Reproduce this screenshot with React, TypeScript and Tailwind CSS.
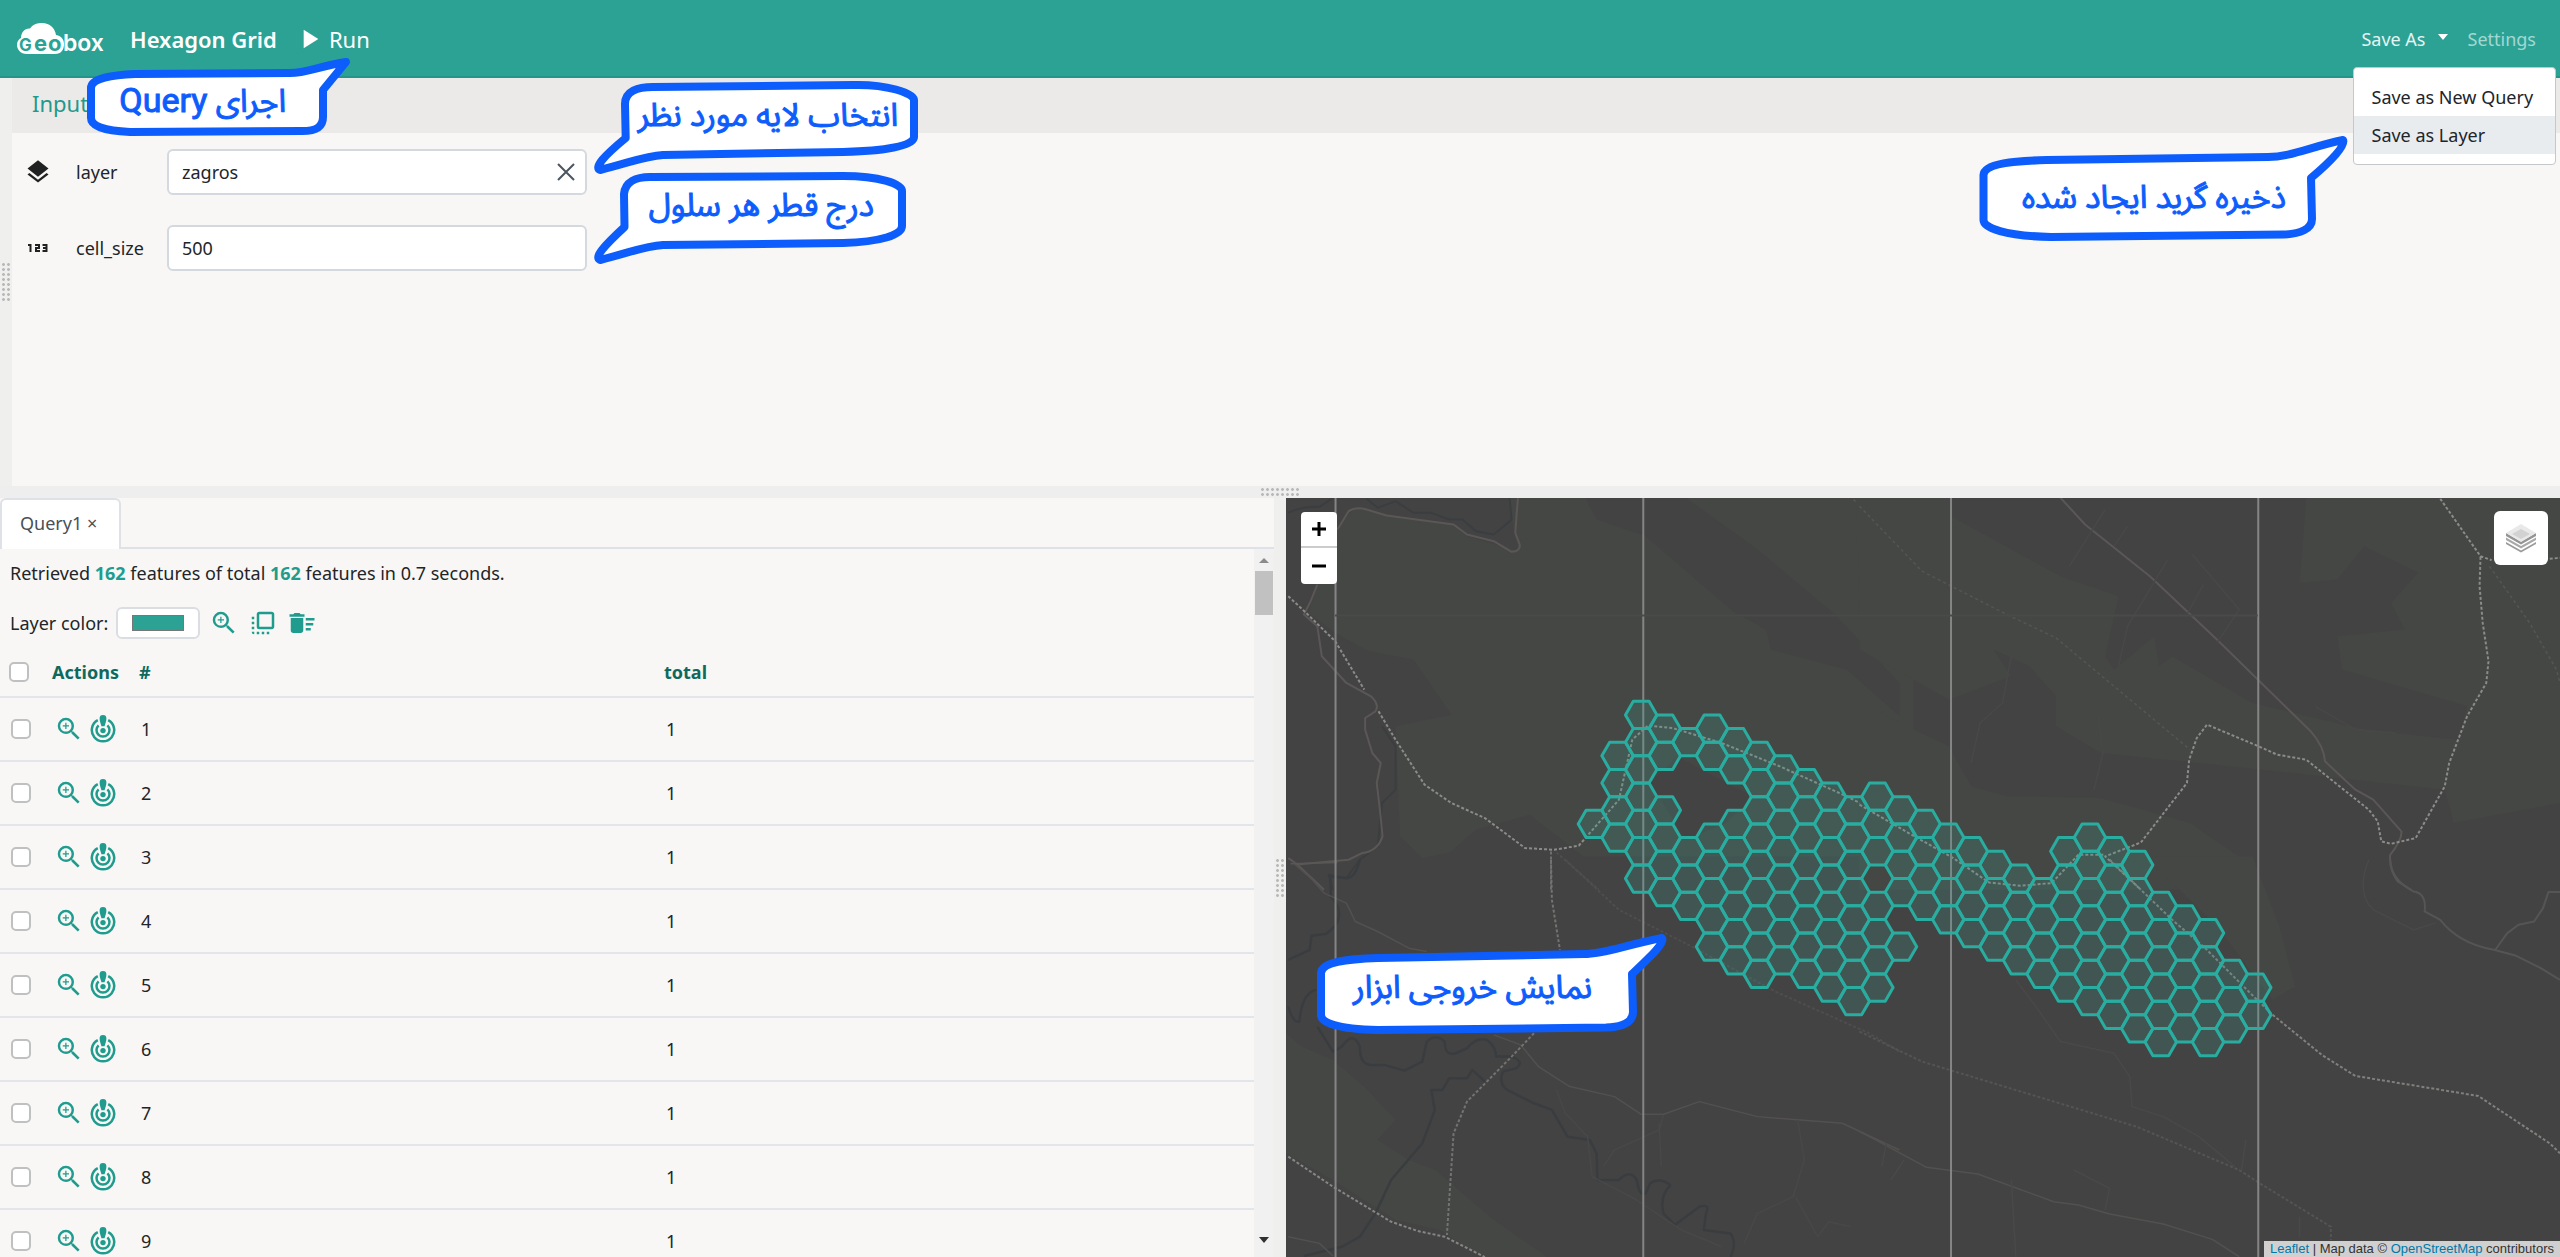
import { type ReactNode } from "react";
import {
  MdDeleteSweep,
  MdFlipToFront,
  MdLayers,
  MdOutlineZoomIn,
  MdPlayArrow,
} from "react-icons/md";

/* ---------- Hexagon grid data: column index -> half-row ranges [from, to] ---------- */

const HEX_COLUMNS: [number, number][][] = [
  [[8, 8]],
  [[3, 9]],
  [[0, 12]],
  [[1, 3], [7, 13]],
  [[2, 2], [10, 14]],
  [[1, 3], [9, 17]],
  [[2, 4], [8, 18]],
  [[3, 19]],
  [[4, 18]],
  [[5, 19]],
  [[6, 20]],
  [[7, 21]],
  [[6, 10], [14, 20]],
  [[7, 13], [17, 17]],
  [[8, 14]],
  [[9, 15]],
  [[10, 16]],
  [[11, 17]],
  [[12, 18]],
  [[13, 19]],
  [[10, 20]],
  [[9, 21]],
  [[10, 22]],
  [[11, 23]],
  [[14, 24]],
  [[15, 23]],
  [[16, 24]],
  [[19, 23]],
  [[20, 22]],
];

const HEX_RADIUS = 15.73;
const HEX_HALF = 13.62;

function hexPoints(column: number, halfRow: number) {
  const cx = 1594.7 + 23.6 * column;
  const cy = 715.3 + HEX_HALF * halfRow;
  const h = HEX_RADIUS / 2;
  return [
    [cx - HEX_RADIUS, cy],
    [cx - h, cy - HEX_HALF],
    [cx + h, cy - HEX_HALF],
    [cx + HEX_RADIUS, cy],
    [cx + h, cy + HEX_HALF],
    [cx - h, cy + HEX_HALF],
  ]
    .map((p) => p.join(","))
    .join(" ");
}

const HEX_CELLS = HEX_COLUMNS.flatMap((ranges, column) =>
  ranges.flatMap(([from, to]) => {
    const cells: string[] = [];
    for (let k = from; k <= to; k += 2) cells.push(hexPoints(column, k));
    return cells;
  }),
);

/* ---------- Icons ---------- */

function Logo() {
  return (
    <svg viewBox="0 0 90 34" className="h-[34px] w-[90px] shrink-0" role="img" aria-label="Geobox">
      <path
        d="M11 32 C4 32 1 27 1 23 C1 19 3 17 5 16 C5 10 9 6 14 6.500 C17 2 22 1 26 1 C34 1 39 6 40 13 C46 14 48 18 48 22 C48 28 45 32 39 32 Z"
        fill="#fff"
      />
      <g fontFamily="Inter" fontWeight="700">
        <g fill="#2ca295">
          <text x="3" y="29" fontSize="17">G</text>
          <text x="18" y="29" fontSize="22">e</text>
          <text x="32" y="29" fontSize="22">o</text>
        </g>
        <text x="47" y="29" fontSize="23" fontWeight="600" fill="#fff">box</text>
      </g>
    </svg>
  );
}

function NumberIcon() {
  return (
    <svg viewBox="0 0 20 10" className="mx-1 h-[10px] w-5 text-[#212121]" fill="none" stroke="currentColor" strokeWidth="2" aria-hidden="true">
      <path d="M0 2h2.500v7M7 2h4v3H8v3h4M14.500 2h4v6h-4M15 5h3.500" />
    </svg>
  );
}

function TargetIcon() {
  return (
    <svg viewBox="0 0 26 28" className="h-7 w-[26px]" fill="none" stroke="currentColor" strokeWidth="2.500" aria-hidden="true">
      <path d="M7.800 5.200A11.200 11.200 0 1 0 18.200 5.200" />
      <path d="M8.600 10.300A6.500 6.500 0 1 0 17.400 10.300" />
      <circle cx="13" cy="15.600" r="2.700" fill="currentColor" stroke="none" />
      <path d="M9.600 3.400a3.400 3.400 0 0 1 6.800 0C16.400 6 15.200 8.500 14.600 11.300h-3.200C10.800 8.500 9.600 6 9.600 3.400Z" fill="currentColor" stroke="none" />
    </svg>
  );
}

function LayersControlIcon() {
  return (
    <svg viewBox="0 0 32 32" className="h-8 w-8" aria-hidden="true">
      <path d="M1 20 16 28.500 31 20 31 22 16 30.500 1 22Z" fill="#9b9b9b" />
      <path d="M1 15.500 16 24 31 15.500 31 18 16 26.500 1 18Z" fill="#a8a8a8" />
      <path d="M1 11 16 19.500 31 11 31 14 16 22.500 1 14Z" fill="#949494" />
      <path d="M16 2 31 11 16 20 1 11Z" fill="#e9e9e9" />
      <path d="M16 7 25 12 16 17 7 12Z" fill="#d2d2d2" />
    </svg>
  );
}

/* ---------- Call-out bubbles ---------- */

function Bubble({
  className,
  viewBox,
  path,
  textClass,
  children,
}: {
  className: string;
  viewBox: string;
  path: string;
  textClass: string;
  children: ReactNode;
}) {
  return (
    <div className={"pointer-events-none absolute z-30 " + className}>
      <svg viewBox={viewBox} className="absolute inset-0 h-full w-full overflow-visible" aria-hidden="true">
        <path d={path} fill="#fff" stroke="#0d5dfd" strokeWidth="8" strokeLinejoin="round" />
      </svg>
      <p
        dir="rtl"
        className={
          "absolute whitespace-nowrap font-['Noto_Sans_Arabic','DejaVu_Sans_Condensed','DejaVu_Sans',sans-serif] text-[32px] leading-[48px] text-[#0d5dfd] [-webkit-text-stroke:1px_#0d5dfd] " +
          textClass
        }
      >
        {children}
      </p>
    </div>
  );
}

/* ---------- Header ---------- */

function Header() {
  return (
    <header className="relative z-20 flex h-[78px] shrink-0 items-center border-b-2 border-[#249588] bg-[#2ca295] pt-[2px] pr-6 pl-4 text-white">
      <Logo />
      <h1 className="ml-6 text-[22px] font-semibold">Hexagon Grid</h1>
      <button type="button" className="ml-4 flex items-center gap-1 text-[22px]">
        <MdPlayArrow className="h-8 w-8" />
        Run
      </button>
      <nav className="ml-auto flex items-center gap-5 text-lg">
        <div className="relative">
          <button type="button" className="flex items-center gap-3 text-[#e4f4f2]" aria-haspopup="menu" aria-expanded="true">
            Save As
            <span className="mb-1 border-x-[5px] border-t-[6px] border-x-transparent border-t-white" />
          </button>
          <ul
            role="menu"
            className="absolute top-[42px] -right-[108px] w-[203px] rounded border border-[#c4c8ca] bg-white py-[10px] text-lg text-[#212529]"
          >
            <li>
              <button type="button" role="menuitem" className="flex h-[38px] w-full items-center pl-[18px] whitespace-nowrap">
                Save as New Query
              </button>
            </li>
            <li>
              <button type="button" role="menuitem" className="flex h-[38px] w-full items-center bg-[#e9ecef] pl-[18px] whitespace-nowrap">
                Save as Layer
              </button>
            </li>
          </ul>
        </div>
        <button type="button" className="text-[#a3d8d1]">Settings</button>
      </nav>
      <Bubble
        className="top-[56px] left-[86px] h-[80px] w-[266px]"
        viewBox="86 56 266 80"
        path="M91 88C91 78 113 75 135 74L290 73C306 73 320 66 346 62L323 90V117C323 127 316 131 302 131L130 132C104 131 91 126 91 118Z"
        textClass="top-[20px] right-[66px]"
      >
        اجرای <span className="font-[Roboto] text-[34px] font-normal">Query</span>
      </Bubble>
    </header>
  );
}

/* ---------- Input parameters ---------- */

function Grip({ vertical = false }: { vertical?: boolean }) {
  return (
    <span
      className={
        "bg-[radial-gradient(#b9b9b9_1.2px,transparent_1.6px)] bg-[size:5px_5px] " +
        (vertical ? "h-[40px] w-[10px]" : "h-[10px] w-[40px]")
      }
    />
  );
}

function InputPanel() {
  return (
    <section className="flex min-h-0 flex-[35]">
      <div className="flex w-3 shrink-0 items-center justify-center bg-[#efefee]">
        <Grip vertical />
      </div>
      <div className="relative min-w-0 flex-1 bg-[#f8f7f5]">
        <h2 className="flex h-[55px] items-center bg-[#ebeae9] pb-1 pl-5 text-[22px] text-[#22998c]">Inputs</h2>
        <form className="flex flex-col gap-[30px] pt-4 pl-3">
          <div className="flex items-center">
            <MdLayers className="h-7 w-7 text-[#212121]" />
            <label htmlFor="layer" className="ml-6 w-[91px] text-lg">layer</label>
            <div className="relative">
              <input
                id="layer"
                defaultValue="zagros"
                className="h-[46px] w-[420px] rounded-md border-2 border-[#d3d9de] bg-white px-[13px] text-lg"
              />
              <button type="button" aria-label="Clear layer" className="absolute inset-y-0 right-3">
                <svg viewBox="0 0 18 18" className="h-[18px] w-[18px]" stroke="#4a5560" strokeWidth="2" aria-hidden="true">
                  <path d="M1 1 17 17M17 1 1 17" />
                </svg>
              </button>
            </div>
          </div>
          <div className="flex items-center">
            <NumberIcon />
            <label htmlFor="cell_size" className="ml-6 w-[91px] text-lg">cell_size</label>
            <input
              id="cell_size"
              defaultValue="500"
              className="h-[46px] w-[420px] rounded-md border-2 border-[#d3d9de] bg-white px-[13px] text-lg"
            />
          </div>
        </form>
        <Bubble
          className="top-[2px] left-[582px] h-[98px] w-[324px]"
          viewBox="594 80 324 98"
          path="M625.700 138L625 104C625 91 638 87 653 87L853 85C886 84 914 93 914 100V137C914 146 885 151 843 152L663 155C645 156 632 162 600 170C594 167 604 156 625.700 138Z"
          textClass="top-[12px] right-[20px]"
        >
          انتخاب لایه مورد نظر
        </Bubble>
        <Bubble
          className="top-[94px] left-[582px] h-[96px] w-[312px]"
          viewBox="594 172 312 96"
          path="M624.500 227L624 194C625 182 636 177 650 177L843 176C880 176 902 184 902 191V226C902 235 880 242 843 243L663 245C645 246 632 252 600 260C594 257 604 246 624.500 227Z"
          textClass="top-[10px] right-[32px]"
        >
          درج قطر هر سلول
        </Bubble>
        <Bubble
          className="top-[58px] right-[211px] h-[106px] w-[371px]"
          viewBox="1978 136 371 106"
          path="M1983.500 175C1984 163 2015 161 2047 160L2268 157C2290 157 2310 147 2343 140C2347 145 2330 162 2311 178L2312 219C2312 229 2300 234 2284 234.500L2051 237C2005 236 1983.500 228 1983.500 220Z"
          textClass="top-[38px] right-[63px]"
        >
          ذخیره گرید ایجاد شده
        </Bubble>
      </div>
    </section>
  );
}

/* ---------- Results ---------- */

function Check({ label }: { label: string }) {
  return (
    <input
      type="checkbox"
      aria-label={label}
      className="block h-5 w-5 appearance-none rounded-[5px] border-2 border-[#bfc0c1] bg-white"
    />
  );
}

function ResultsPanel() {
  return (
    <section className="flex min-w-0 flex-1 flex-col bg-[#f8f7f5]">
      <div className="flex h-[51px] shrink-0 border-b-2 border-[#dee2e6]">
        <button
          type="button"
          role="tab"
          aria-selected="true"
          className="h-[51px] w-[121px] rounded-t-md border-x-2 border-t-2 border-[#dee2e6] bg-white pb-1 pl-[18px] text-left text-lg text-[#495057]"
        >
          Query1 <span className="text-lg">×</span>
        </button>
      </div>
      <div className="flex min-h-0 flex-1">
        <div className="min-w-0 flex-1 overflow-hidden">
          <p className="px-[10px] pt-[10px] text-lg leading-7">
            Retrieved <b className="text-[#1f9c8e]">162</b> features of total{" "}
            <b className="text-[#1f9c8e]">162</b> features in 0.7 seconds.
          </p>
          <div className="mt-5 flex h-8 items-center px-[10px] text-[#1f9c8e]">
            <label htmlFor="layer-color" className="w-[106px] text-lg text-[#212529]">Layer color:</label>
            <input
              id="layer-color"
              type="color"
              defaultValue="#2ca295"
              className="h-8 w-[84px] rounded-md border-2 border-[#dadde1] bg-white px-[14px] py-[6px] [&::-webkit-color-swatch-wrapper]:p-0"
            />
            <button type="button" aria-label="Zoom to layer" className="ml-[9px]">
              <MdOutlineZoomIn className="h-[30px] w-[30px]" />
            </button>
            <button type="button" aria-label="Select all" className="ml-[9px]">
              <MdFlipToFront className="h-[30px] w-[30px]" />
            </button>
            <button type="button" aria-label="Remove" className="ml-[9px]">
              <MdDeleteSweep className="h-[30px] w-[30px]" />
            </button>
          </div>
          <table className="mt-1 w-full table-fixed border-collapse text-lg text-[#212529]">
            <thead>
              <tr className="h-[54px] border-b-2 border-[#e2e5e9] text-left text-[#0f6a5d]">
                <th className="w-[52px] pt-1 pl-[9px]"><Check label="Select all rows" /></th>
                <th className="w-[87px] pt-1">Actions</th>
                <th className="w-[525px] pt-1">#</th>
                <th className="pt-1">total</th>
              </tr>
            </thead>
            <tbody>
              {[1, 2, 3, 4, 5, 6, 7, 8, 9].map((n) => (
                <tr key={n} className="h-16 border-b-2 border-[#e2e5e9]">
                  <td className="pl-[11px]"><Check label={"Select row " + n} /></td>
                  <td>
                    <div className="flex items-center gap-[6px] pl-[2px] text-[#1f9c8e]">
                      <button type="button" aria-label={"Zoom to feature " + n}>
                        <MdOutlineZoomIn className="h-[30px] w-[30px]" />
                      </button>
                      <button type="button" aria-label={"Flash feature " + n}>
                        <TargetIcon />
                      </button>
                    </div>
                  </td>
                  <td className="pl-[2px]">{n}</td>
                  <td className="pl-[2px]">1</td>
                </tr>
              ))}
            </tbody>
          </table>
        </div>
        <div className="flex w-5 shrink-0 flex-col items-center bg-[#f1f1f1] pt-[9px] pb-[14px]">
          <span className="border-x-[5px] border-b-[5px] border-x-transparent border-b-[#8b8b8b]" />
          <span className="mt-2 h-11 w-[18px] bg-[#c1c1c1]" />
          <span className="mt-auto border-x-[5px] border-t-[6px] border-x-transparent border-t-[#303030]" />
        </div>
      </div>
    </section>
  );
}

/* ---------- Map ---------- */

const NS = { vectorEffect: "non-scaling-stroke" as const };

function MapDrawing() {
  return (
    <svg
      viewBox="1287 498 1273 759"
      preserveAspectRatio="xMidYMid slice"
      className="absolute inset-0 h-full w-full"
      role="img"
      aria-label="Map of the hexagon grid"
    >
      <rect x="1287" y="498" width="1273" height="759" fill="#434343" />

      {/* north-west tile */}
      <g transform="translate(1200 470) scale(0.44643 0.33333)" fill="none" strokeLinejoin="round">
        <path
          d="M305 180L350 115 430 140 570 165 600 200 715 245 690 85H1600V1160H860L740 1035 620 1080 560 1150 500 1165 450 1100 440 770 565 735 480 570 380 545 305 490 245 430Z"
          fill="#454744"
        />
        <path d="M865 85H1090L1250 240 1420 430 1568 640V740L1450 600 1280 540 1270 480 1200 430 1000 200 890 150Z" fill="#434343" />
        <path d="M1070 860L1180 940 1240 980 1180 1060 1090 1110 1010 940Z" fill="#434343" />
        <g stroke="#3b3e41" strokeWidth="2">
          <path style={NS} d="M200 130Q230 110 270 112L300 85M375 88L400 115 440 95 480 130 520 130 560 150 590 150 620 185 660 195 700 150 695 85" />
          <path style={NS} d="M410 770L440 830 440 960 410 1000 400 1130 360 1170 330 1225 290 1215 300 1260" />
        </g>
        <g stroke="#5b5756" strokeWidth="2">
          <path style={NS} d="M310 180L335 125Q350 110 375 120L420 138 570 165 600 195 660 215 700 247Q720 245 718 225L708 190 714 85" />
          <path style={NS} d="M265 345L250 395 235 435 265 470 275 560 330 640 385 680Q405 705 395 725L372 745 372 780 388 850 407 880 398 940 405 1020 411 1100Q400 1145 365 1150L335 1170 220 1184 200 1165M220 1184L280 1260" />
        </g>
        <path style={NS} d="M1465 90L1568 225" stroke="#565755" strokeWidth="1.500" strokeDasharray="3 3" />
        <g stroke="#8b8b89" strokeWidth="2" strokeDasharray="3 2">
          <path style={NS} d="M200 380L240 430 305 515 370 660M402 725L440 810 505 945 565 1000 640 1045 730 1135 795 1140 850 1128 940 990 970 810 1005 768 1060 775 1170 820 1300 890 1450 980 1568 1060" />
          <path style={NS} d="M788 1145V1260" stroke="#707070" />
        </g>
        <path style={NS} d="M800 1148L895 1260" stroke="#4e4e4e" strokeWidth="2" strokeDasharray="3 2" />
      </g>

      {/* north-east tile */}
      <g transform="translate(1860 470) scale(0.44643 0.33333)" fill="none" strokeLinejoin="round">
        <path d="M-5 85H205V140L450 320 580 380 550 560 570 600 660 500 670 590 700 560 880 700 1130 780 1340 810 1360 710 1080 600 1070 500 1220 480 1190 400 1250 310 1130 230 1070 330 985 340 1000 85H1568V1000L1330 1060 1310 960 900 900 760 880 540 850 440 770V680L380 590 300 540 340 620 200 690 0 540Z" fill="#454744" />
        <path d="M0 700L200 830 250 950 330 980 540 985 740 1060 870 1180 880 1260H0Z" fill="#454744" />
        <path style={NS} d="M450 85L505 165 650 320 800 510 1010 785Q1040 830 1042 875L1110 960 1150 990 1213 1085Q1215 1110 1188 1155 1185 1200 1205 1235L1235 1260" stroke="#5b5756" strokeWidth="2" />
        <path style={NS} d="M0 110L140 305 330 435 440 505 740 840" stroke="#555654" strokeWidth="1.500" strokeDasharray="3 3" />
        <path style={NS} d="M1410 290L1500 460 1560 600 1568 640" stroke="#565656" strokeWidth="1.500" strokeDasharray="3 3" />
        <path style={NS} d="M550 120L470 290M600 170L570 230M690 270L600 470 580 590M745 255L850 420 800 520M770 345L735 430M340 560L320 700 270 760 250 880M535 740L545 850 525 960M1020 710L1110 780 1200 790" stroke="#494848" strokeWidth="1.500" />
        <g stroke="#8b8b89" strokeWidth="2" strokeDasharray="3 2">
          <path style={NS} d="M1300 88L1390 260 1415 272M1545 268L1568 265M1390 262L1388 350 1395 460 1408 575 1403 640 1360 740 1320 880 1310 950 1245 1105 1190 1122 1168 1115 1160 1055 1140 1020 1000 870 935 855 890 828 778 765 755 805 738 870 733 940 630 1118 550 1160 630 1260" />
          <path style={NS} d="M0 1005L110 1090 210 1165 290 1238 360 1248 430 1240 490 1155 550 1155" />
        </g>
      </g>

      {/* south-west tile */}
      <g transform="translate(1200 860) scale(0.44643 0.33333)" fill="none" strokeLinejoin="round">
        <path d="M195 520L230 560 300 600 370 680 440 780 400 840 470 900 530 930 590 1000 660 1080 780 1191H630L540 1110 440 1080 300 960 195 880Z" fill="#454744" />
        <g stroke="#3a3d40" strokeWidth="2.500">
          <path style={NS} d="M360 0Q350 60 325 55T295 50V110Q330 160 300 205L285 222 252 228 248 270 200 300M200 440Q210 490 225 485 230 400 262 390M265 500L300 575 320 560Q345 510 360 560 360 615 385 615L415 615 460 632 500 605 510 545Q530 520 550 545 550 590 575 580L600 565Q620 530 645 540 665 560 665 590H700Q730 605 710 625L680 635Q670 670 690 690L750 730 790 750 825 830 875 840 890 880 892 960 940 960Q965 925 980 960 985 1010 1000 1000L1010 970Q1030 950 1055 975 1030 1010 1040 1060L1065 1095 1120 1040Q1145 1030 1135 1060L1130 1110Q1155 1115 1190 1120 1205 1150 1190 1191" />
          <path style={NS} d="M640 665L612 630 600 655 560 655 545 690 520 690 528 750 500 850 430 960 395 1060 360 1130 320 1160 235 1188" />
        </g>
        <g stroke="#535150" strokeWidth="1.500">
          <path style={NS} d="M210 8L250 55 280 100 330 130 350 185 400 215 470 265 510 275M660 525L720 555 760 620 830 680 930 710 990 763H1040L1120 725 1250 770 1440 790 1568 870M200 1130L270 1150 300 1188" />
          <path style={NS} d="M205 12L310 8" stroke="#5b5756" />
          <path style={NS} d="M1040 765L1030 810 930 870 905 920M1030 790L1035 920M800 690L820 760 870 830 880 950 980 1020 1080 1110 1170 1160M1340 780L1355 900 1330 1010 1250 1060 1220 1150M1335 1010L1385 1130 1410 1085 1460 1100" stroke="#484848" />
        </g>
        <path style={NS} d="M820 0L940 150 1110 265 1290 395 1500 520 1568 575" stroke="#4e4e4e" strokeWidth="2" strokeDasharray="3 2" />
        <g stroke="#737371" strokeWidth="2" strokeDasharray="3 2">
          <path style={NS} d="M788 0L790 120 808 270M750 520L700 590 600 725 570 820 555 1125" />
          <path style={NS} stroke="#868684" d="M200 890L300 980 430 1085 490 1113 550 1130 640 1191" />
        </g>
      </g>

      {/* south-east tile */}
      <g transform="translate(1860 860) scale(0.44643 0.33333)" fill="none" strokeLinejoin="round">
        <path d="M640 -10H880L940 200 975 380 925 420 800 200Z" fill="#454744" />
        <path style={NS} d="M1188 0Q1190 60 1240 95 1270 100 1265 155L1300 180Q1340 250 1420 270L1470 288 1525 325 1568 360M1422 272L1450 220 1475 195 1510 185 1530 145 1542 97H1568" stroke="#575454" strokeWidth="2" />
        <path style={NS} d="M0 815L30 835 150 922 265 942 435 1025 490 1035 560 1062 680 1092 790 1138 850 1190" stroke="#535150" strokeWidth="1.500" />
        <path style={NS} d="M350 360L400 450 450 545 570 580 605 650 610 740 680 770 760 830 840 920M865 840L855 930M480 930L560 985 550 1050M340 960L350 1190M60 850L50 920M100 900L70 960M985 1130V1070M1140 0Q1110 100 1150 150L1240 210 1290 190" stroke="#494949" strokeWidth="1.500" />
        <path style={NS} d="M0 515L140 605 620 800 850 930 890 965 1055 1100V1140" stroke="#545454" strokeWidth="2" strokeDasharray="3 2" />
        <path style={NS} d="M560 0L700 180 770 260 890 420 925 465 1035 585 1110 648 1385 708 1545 850 1568 880" stroke="#80807e" strokeWidth="2" strokeDasharray="3 2" />
      </g>

      <path d="M1336.500 498V1257M1644 498V1257M1951.500 498V1257M2258.500 498V1257" stroke="#858585" strokeWidth="2" />
      <path d="M1336 616H2258" stroke="#494b48" strokeWidth="2" />

      <g fill="#3aa596" fillOpacity="0.2" stroke="#29ada0" strokeWidth="3" strokeLinejoin="round">
        {HEX_CELLS.map((points) => (
          <polygon key={points} points={points} />
        ))}
      </g>
    </svg>
  );
}

function MapPanel() {
  return (
    <section className="relative min-w-0 flex-1 overflow-hidden bg-[#434343]">
      <MapDrawing />
      <div className="absolute top-[14px] left-[15px] flex w-9 flex-col rounded-sm bg-white text-black">
        <button type="button" aria-label="Zoom in" className="flex h-9 items-center justify-center border-b-2 border-[#ccc]">
          <svg viewBox="0 0 16 16" className="h-4 w-4" stroke="currentColor" strokeWidth="3" aria-hidden="true">
            <path d="M1 8H15M8 1V15" />
          </svg>
        </button>
        <button type="button" aria-label="Zoom out" className="flex h-9 items-center justify-center">
          <svg viewBox="0 0 16 16" className="h-4 w-4" stroke="currentColor" strokeWidth="3" aria-hidden="true">
            <path d="M1 8H15" />
          </svg>
        </button>
      </div>
      <button
        type="button"
        aria-label="Layers"
        className="absolute top-[13px] right-3 flex h-[54px] w-[54px] items-center justify-center rounded-md bg-white"
      >
        <LayersControlIcon />
      </button>
      <p className="absolute right-0 bottom-0 bg-[#d0d0d0] px-[6px] font-['Liberation_Sans',sans-serif] text-[13px] leading-4 whitespace-nowrap text-[#333]">
        <a href="#leaflet" className="text-[#0078a8]">Leaflet</a> | Map data ©{" "}
        <a href="#osm" className="text-[#0078a8]">OpenStreetMap</a> contributors
      </p>
      <Bubble
        className="top-[434px] left-[30px] h-[100px] w-[352px]"
        viewBox="1316 932 352 100"
        path="M1321 973C1322 961 1350 959 1378 958L1584 954C1605 954 1625 945 1662 938C1666 942 1650 957 1632 974L1633 1012C1633 1023 1622 1027 1606 1027.600L1378 1030C1335 1029 1321 1022 1321 1015Z"
        textClass="top-[32px] right-[76px]"
      >
        نمایش خروجی ابزار
      </Bubble>
    </section>
  );
}

export default function App() {
  return (
    <div className="flex h-screen flex-col overflow-hidden bg-[#eeeeee] font-['Noto_Sans','Open_Sans',sans-serif] text-[#212529]">
      <Header />
      <InputPanel />
      <div className="flex h-3 shrink-0 items-center justify-center bg-[#eeeeee]">
        <Grip />
      </div>
      <main className="flex min-h-0 flex-[65]">
        <ResultsPanel />
        <div className="flex w-3 shrink-0 items-center justify-center bg-[#efefee]">
          <Grip vertical />
        </div>
        <MapPanel />
      </main>
    </div>
  );
}
